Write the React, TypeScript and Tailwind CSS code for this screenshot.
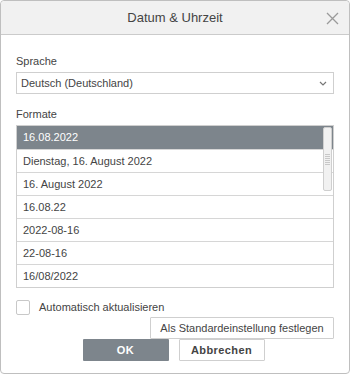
import { useState } from "react";

const formats = [
  "16.08.2022",
  "Dienstag, 16. August 2022",
  "16. August 2022",
  "16.08.22",
  "2022-08-16",
  "22-08-16",
  "16/08/2022",
];

export default function App() {
  const [selected, setSelected] = useState(0);
  const [auto, setAuto] = useState(false);

  return (
    <div className="h-[375px] w-[350px] bg-white font-['Liberation_Sans',Arial,sans-serif] text-[11px] text-[#444]">
      <div className="flex h-[374px] flex-col rounded-[4px] border border-[#bfbfbf] bg-white">
        <header className="relative flex h-[34px] shrink-0 items-center justify-center rounded-t-[4px] border-b border-[#cbcbcb] bg-[#f1f1f1]">
          <span className="text-[13px] text-[#444]">Datum &amp; Uhrzeit</span>
          <button type="button" className="absolute right-[10px] top-[11px] h-[13px] w-[13px]">
            <svg viewBox="0 0 13 13" className="h-[13px] w-[13px]">
              <path d="M1 1 L12 12 M12 1 L1 12" stroke="#9a9a9a" strokeWidth="1.3" fill="none" />
            </svg>
          </button>
        </header>

        <div className="flex flex-col px-[15px]">
          <label className="mt-[19px] h-[14px] leading-[14px]">Sprache</label>
          <div className="mt-[4px] flex h-[22px] items-center justify-between border border-[#cfcfcf] pl-[4px] pr-[6px]">
            <span>Deutsch (Deutschland)</span>
            <svg viewBox="0 0 8 5" className="h-[5px] w-[8px]">
              <path d="M1 1 L4 4 L7 1" stroke="#777" strokeWidth="1.2" fill="none" />
            </svg>
          </div>

          <label className="mt-[13px] h-[14px] leading-[14px]">Formate</label>
          <div className="relative mt-[4px] border border-[#cfcfcf]">
            {formats.map((f, i) => (
              <div
                key={f}
                onClick={() => setSelected(i)}
                className={
                  "flex h-[23px] items-center pl-[6px] " +
                  (i > 0 ? "border-t border-[#d6d6d6] " : "") +
                  (selected === i ? "bg-[#7d858c] text-white" : "bg-white text-[#444]")
                }
              >
                {f}
              </div>
            ))}
            <div className="absolute right-[1px] top-[1px] flex h-[64px] w-[9px] flex-col items-center justify-center gap-[1px] rounded-[2px] border border-[#cfcfcf] bg-[#f1f1f1]">
              {[0, 1, 2, 3, 4, 5].map((n) => (
                <div key={n} className="h-px w-[5px] bg-[#c8c8c8]" />
              ))}
            </div>
          </div>

          <label className="mt-[12px] flex h-[15px] items-center gap-[9px]" onClick={() => setAuto(!auto)}>
            <span className="h-[15px] w-[14px] rounded-[2px] border border-[#c8c8c8] bg-white">
              {auto ? (
                <svg viewBox="0 0 14 14" className="h-[12px] w-[12px]">
                  <path d="M3 7 L6 10 L11 3" stroke="#444" strokeWidth="1.5" fill="none" />
                </svg>
              ) : null}
            </span>
            <span className="leading-[15px]">Automatisch aktualisieren</span>
          </label>

          <div className="mt-[2px] flex justify-end">
            <button
              type="button"
              className="h-[22px] w-[184px] rounded-[1px] border border-[#cfcfcf] bg-white text-[11px] text-[#444]"
            >
              Als Standardeinstellung festlegen
            </button>
          </div>

          <div className="flex justify-center gap-[10px] pr-[3px]">
            <button
              type="button"
              className="h-[22px] w-[86px] rounded-[1px] bg-[#7d858c] text-[11px] font-bold tracking-[0.4px] text-white"
            >
              OK
            </button>
            <button
              type="button"
              className="h-[22px] w-[86px] rounded-[1px] border border-[#cfcfcf] bg-white text-[11px] font-bold tracking-[0.4px] text-[#444]"
            >
              Abbrechen
            </button>
          </div>
        </div>
      </div>
    </div>
  );
}
